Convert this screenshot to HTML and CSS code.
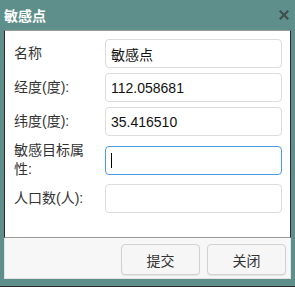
FILE: index.html
```html
<!DOCTYPE html>
<html lang="zh-CN">
<head>
  <meta charset="UTF-8">
  <meta name="viewport" content="width=device-width, initial-scale=1.0">
  <title>敏感点</title>
  <link rel="stylesheet" href="styles.css">
</head>
<body>
  <div class="dialog">
    <header class="dialog-header">
      <span class="dialog-title">敏感点</span>
      <button type="button" class="dialog-close" aria-label="关闭">
        <svg viewBox="0 0 10 10" xmlns="http://www.w3.org/2000/svg">
          <path d="M1.5 1.5L8.5 8.5M8.5 1.5L1.5 8.5" stroke="currentColor" stroke-width="2.2" stroke-linecap="square"/>
        </svg>
      </button>
    </header>

    <main class="dialog-body">
      <form class="point-form">
        <label class="field-label" for="f-name">名称</label>
        <input class="field-input" id="f-name" type="text" value="敏感点">

        <label class="field-label" for="f-lng">经度(度):</label>
        <input class="field-input" id="f-lng" type="text" value="112.058681">

        <label class="field-label" for="f-lat">纬度(度):</label>
        <input class="field-input" id="f-lat" type="text" value="35.416510">

        <label class="field-label" for="f-attr">敏感目标属性:</label>
        <div class="input-wrap">
          <input class="field-input is-focused" id="f-attr" type="text">
          <span class="fake-caret"></span>
        </div>

        <label class="field-label" for="f-pop">人口数(人):</label>
        <input class="field-input" id="f-pop" type="text">
      </form>
    </main>

    <footer class="dialog-footer">
      <button type="button" class="dialog-button">提交</button>
      <button type="button" class="dialog-button">关闭</button>
    </footer>
  </div>
</body>
</html>
```

FILE: styles.css
```css
/* Dialog colours */
:root {
  --color-frame: #5f8f8a;
  --color-border-dark: #2b2b2b;
  --color-border: #dcdcdc;
  --color-text: #333333;
  --color-focus: #4a9be6;
  --font-main: "Liberation Sans", "Noto Sans CJK SC", sans-serif;
}

* {
  box-sizing: border-box;
  margin: 0;
  padding: 0;
}

body {
  font-family: var(--font-main);
  font-size: 14px;
  background-color: var(--color-frame);
  color: var(--color-text);
}

.dialog {
  width: 295px;
  height: 287px;
  display: flex;
  flex-direction: column;
  border-bottom: 1px solid var(--color-border-dark);
}

/* Title bar */
.dialog-header {
  height: 30px;
  display: flex;
  align-items: center;
  justify-content: space-between;
  padding: 0 6px 1px 4px;
}

.dialog-title {
  color: #ffffff;
  font-weight: bold;
  font-size: 14px;
}

.dialog-close {
  width: 10px;
  height: 10px;
  border: none;
  background: none;
  color: #3e4f4c;
  display: flex;
  cursor: pointer;
}

.dialog-close svg {
  width: 10px;
  height: 10px;
}

/* Body */
.dialog-body {
  margin: 0 4px;
  height: 208px;
  background-color: #ffffff;
  border-top: 1px solid #9a9a9a;
  border-bottom: 1px solid #9a9a9a;
  border-left: 1px solid var(--color-border-dark);
  border-right: 1px solid var(--color-border-dark);
}

.point-form {
  display: grid;
  grid-template-columns: 76px 1fr;
  column-gap: 15px;
  row-gap: 5px;
  align-items: center;
  padding: 8px 8px 0 9px;
}

.field-label {
  line-height: 19px;
  color: var(--color-text);
}

.input-wrap {
  position: relative;
}

.field-input {
  width: 100%;
  height: 29px;
  padding: 0 5px;
  border: 1px solid var(--color-border);
  border-radius: 4px;
  font-family: var(--font-main);
  font-size: 14px;
  color: #111111;
  background-color: #ffffff;
  outline: none;
}

.field-input.is-focused {
  border-color: var(--color-focus);
}

.fake-caret {
  position: absolute;
  left: 6px;
  top: 7px;
  width: 1px;
  height: 15px;
  background-color: #000000;
}

/* Footer */
.dialog-footer {
  margin: 0 4px;
  display: flex;
  justify-content: flex-end;
  gap: 7px;
  padding: 6px 4px 3px;
  background-color: #f7f7f7;
  border: 1px solid #e2e2e2;
  border-top: none;
}

.dialog-button {
  width: 79px;
  height: 31px;
  border: 1px solid #d2d2d2;
  border-radius: 4px;
  background-color: #f6f6f6;
  box-shadow: 0 1px 1px rgba(0, 0, 0, 0.08);
  font-family: var(--font-main);
  font-size: 14px;
  color: var(--color-text);
  cursor: pointer;
}
```
